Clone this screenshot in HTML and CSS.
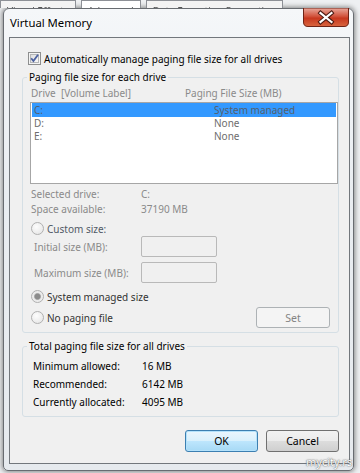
FILE: index.html
```html
<!DOCTYPE html>
<html lang="en">
<head>
    <meta charset="UTF-8">
    <meta name="viewport" content="width=device-width, initial-scale=1.0">
    <title>Virtual Memory</title>
    <link rel="stylesheet" href="styles.css">
</head>
<body>
    <div class="desk">
        <div class="tabs">
            <span class="tab">Visual Effects</span>
            <span class="tab on">Advanced</span>
            <span class="tab">Data Execution Prevention</span>
        </div>
        <div class="win">
            <div class="titlebar">
                <span class="title">Virtual Memory</span>
                <span class="close">
                    <svg width="46" height="19" viewBox="0 0 46 19">
                        <defs>
                            <linearGradient id="red" x1="0" y1="0" x2="0" y2="1">
                                <stop offset="0" stop-color="#e9a99c"/>
                                <stop offset="0.45" stop-color="#d2533c"/>
                                <stop offset="0.55" stop-color="#c7381f"/>
                                <stop offset="1" stop-color="#d9663f"/>
                            </linearGradient>
                        </defs>
                        <path d="M0.5 0 H45.5 V14 Q45.5 18.5 41 18.5 H5 Q0.5 18.5 0.5 14 Z" fill="url(#red)" stroke="#6e2316"/>
                        <path d="M17.5 5 L28.5 14 M28.5 5 L17.5 14" stroke="#4b1a12" stroke-width="4.2" stroke-linecap="square"/>
                        <path d="M17.5 5 L28.5 14 M28.5 5 L17.5 14" stroke="#fff" stroke-width="2.2" stroke-linecap="square"/>
                    </svg>
                </span>
            </div>
            <div class="client">
                <div class="auto">
                    <svg width="13" height="13" viewBox="0 0 13 13">
                        <defs>
                            <linearGradient id="box" x1="0" y1="0" x2="1" y2="1">
                                <stop offset="0" stop-color="#dcdcdc"/>
                                <stop offset="1" stop-color="#fbfbfb"/>
                            </linearGradient>
                        </defs>
                        <rect x="0.5" y="0.5" width="12" height="12" fill="#f4f4f4" stroke="#8e8f8f"/>
                        <rect x="2.5" y="2.5" width="8" height="8" fill="url(#box)" stroke="#b5b7b9"/>
                        <path d="M3.2 6.3 L5.4 9 L10 2.8" fill="none" stroke="#4c61a0" stroke-width="1.8"/>
                    </svg>
                    <span>Automatically manage paging file size for all drives</span>
                </div>

                <fieldset class="group">
                    <legend>Paging file size for each drive</legend>
                    <div class="cols">
                        <span class="c1">Drive&nbsp; [Volume Label]</span>
                        <span>Paging File Size (MB)</span>
                    </div>
                    <div class="list">
                        <div class="row sel"><span class="c1">C:</span><span>System managed</span></div>
                        <div class="row"><span class="c1">D:</span><span>None</span></div>
                        <div class="row"><span class="c1">E:</span><span>None</span></div>
                    </div>
                    <div class="info">
                        <span>Selected drive:</span><span>C:</span>
                        <span>Space available:</span><span>37190 MB</span>
                    </div>
                    <div class="opt first">
                        <span class="radio"></span>
                        <span class="dim">Custom size:</span>
                    </div>
                    <div class="field">
                        <label>Initial size (MB):</label>
                        <span class="box"></span>
                    </div>
                    <div class="field next">
                        <label>Maximum size (MB):</label>
                        <span class="box"></span>
                    </div>
                    <div class="opt sys">
                        <span class="radio on"></span>
                        <span>System managed size</span>
                    </div>
                    <div class="opt none">
                        <span class="radio"></span>
                        <span>No paging file</span>
                        <span class="btn set">Set</span>
                    </div>
                </fieldset>

                <fieldset class="group total">
                    <legend>Total paging file size for all drives</legend>
                    <div class="totals">
                        <span>Minimum allowed:</span><span>16 MB</span>
                        <span>Recommended:</span><span>6142 MB</span>
                        <span>Currently allocated:</span><span>4095 MB</span>
                    </div>
                </fieldset>

                <div class="buttons">
                    <span class="btn ok">OK</span>
                    <span class="btn">Cancel</span>
                </div>
            </div>
        </div>
        <div class="mark">mycity.rs</div>
    </div>
</body>
</html>
```

FILE: styles.css
```css
body { margin: 0; font-family: "Noto Sans", sans-serif; font-size: 10px; color: #000; }
.desk { position: relative; width: 360px; height: 473px; overflow: hidden; background: #eef0f2; }

.tabs { height: 8px; display: flex; gap: 5px; overflow: hidden; filter: blur(0.6px); }
.tab { height: 20px; padding: 3px 6px 0; border: 1px solid #8d9096; border-bottom: none; background: #f3f3f3; line-height: 14px; color: #555; white-space: nowrap; }
.tab.on { background: #fff; }

.win { margin-left: 3px; width: 351px; height: 463px; box-sizing: border-box; border: 1px solid #686c71; border-radius: 6px 6px 5px 5px; background: linear-gradient(#f5f7f9, #e9edf1 40%, #e6eaee); box-shadow: 0 0 5px 1px rgba(0,0,0,.45); display: flex; flex-direction: column; }
.titlebar { height: 28px; display: flex; justify-content: space-between; align-items: flex-start; padding-left: 6px; }
.title { line-height: 27px; font-size: 11.3px; text-shadow: 0 0 5px #fff, 0 0 3px #fff; }
.close { height: 19px; margin: -1px 4px 0 0; }
.close svg { display: block; }

.client { margin: 0 3px 0 5px; height: 427px; box-sizing: border-box; border: 1px solid #72777c; background: #f0f0f0; }

.auto { display: flex; align-items: center; gap: 3px; height: 13px; margin: 14px 0 0 18px; }
.auto svg { display: block; }

.group { margin: 5px 10px 0 12px; padding: 0 0 4px; min-width: 0; border: 1px solid #d5dfe5; border-radius: 3px; }
.group legend { margin-left: 4px; padding: 0 2px; line-height: 15px; }

.cols { display: flex; margin-top: 1px; padding-left: 8px; line-height: 14px; color: #8a8a8a; }
.cols .c1 { width: 154px; }

.list { margin: 2px 0 0 7px; width: 308px; height: 82px; box-sizing: border-box; padding: 0 1px; border: 1px solid #a6a6a6; background: #fff; }
.row { display: flex; height: 13px; padding-left: 2px; line-height: 13px; color: #6d6d6d; }
.row .c1 { width: 180px; }
.row.sel { height: 14px; line-height: 14px; background: #3399ff; color: #56606c; }

.info { display: grid; grid-template-columns: 110px auto; margin-top: 3px; padding-left: 8px; line-height: 15px; color: #8a8a8a; }

.opt { display: flex; align-items: center; gap: 3px; height: 15px; padding-left: 8px; color: #333; }
.opt.first { margin-top: 4px; }
.opt.sys { margin-top: 6px; }
.opt.none { height: 21px; margin-top: 3px; }
.dim { color: #505a66; }
.radio { width: 11px; height: 11px; border: 1px solid #b0b0b0; border-radius: 50%; background: radial-gradient(circle at 40% 35%, #fdfdfd, #e2e2e2); }
.radio.on { background: radial-gradient(circle, #8c8c8c 0 2.5px, #b4b4b4 3.2px, #eaeaea 3.8px, #f2f2f2); }

.field { display: flex; align-items: center; height: 21px; padding-left: 11px; color: #8a8a8a; }
.field label { width: 107px; }
.field.next { margin-top: 5px; }
.box { width: 76px; height: 21px; box-sizing: border-box; border: 1px solid #b9b9b9; border-radius: 2px; background: #f0f0f0; }

.btn { display: flex; align-items: center; justify-content: center; width: 73px; height: 22px; box-sizing: border-box; border: 1px solid #707070; border-radius: 3px; background: linear-gradient(#f2f2f2, #ebebeb 49%, #dddddd 50%, #cfcfcf); font-size: 10.5px; }
.btn.set { width: 74px; height: 21px; margin: 0 8px 0 auto; border-color: #adb2b5; background: #f4f4f4; color: #838383; }
.btn.ok { border-color: #3c7fb1; background: linear-gradient(#eaf6fd, #d9f0fc 49%, #bee6fd 50%, #a7d9f5); box-shadow: inset 0 0 0 1px #b4e2fb; }

.total { margin-top: 6px; padding-bottom: 5px; }
.totals { display: grid; grid-template-columns: 109px auto; padding: 3px 0 0 10px; line-height: 18px; }

.buttons { display: flex; justify-content: flex-end; gap: 8px; margin: 13px 10px 0 0; }

.mark { position: absolute; right: 8px; bottom: 4px; font-size: 11px; color: #fff; text-shadow: 0 0 1px #555, 0 0 2px #777; }
```
